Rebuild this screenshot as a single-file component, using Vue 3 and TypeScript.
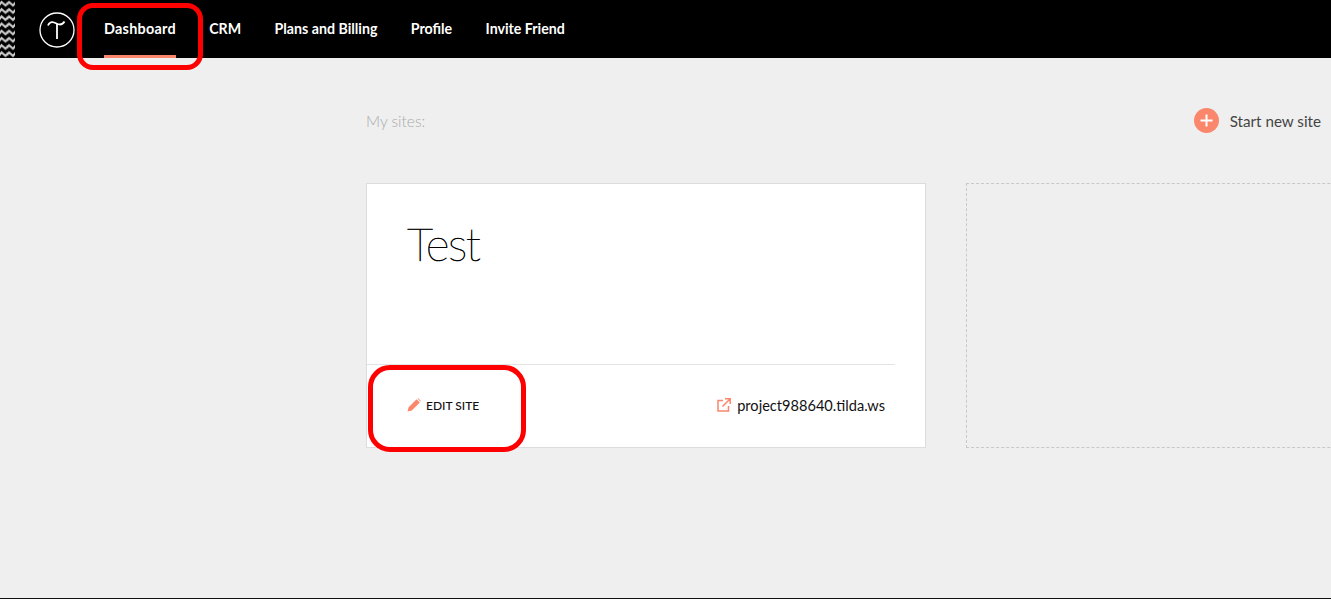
<script setup lang="ts">
const navItems: { label: string; active?: boolean }[] = [
  { label: 'Dashboard', active: true },
  { label: 'CRM' },
  { label: 'Plans and Billing' },
  { label: 'Profile' },
  { label: 'Invite Friend' },
]
</script>

<template>
  <div class="page">
    <header class="topbar">
      <svg class="zigzag" width="15" height="58" viewBox="0 0 15 58" aria-hidden="true">
        <defs>
          <pattern id="zz" width="7.5" height="7.2" patternUnits="userSpaceOnUse">
            <path d="M-1 5.5 L1.5 2 L5.5 5.5 L8.5 2" fill="none" stroke="#cfcfcf" stroke-width="2" />
          </pattern>
        </defs>
        <rect width="15" height="58" fill="url(#zz)" />
      </svg>
      <svg class="logo" width="36" height="36" viewBox="0 0 36 36" aria-hidden="true">
        <circle cx="18" cy="18" r="17" fill="none" stroke="#fff" stroke-width="1.3" />
        <path d="M9 13.5 C11 9 14 9.5 17.5 11.5 C20.5 13 23.5 13 25.5 9.5" fill="none" stroke="#fff" stroke-width="1.8" />
        <path d="M18 12 V27" fill="none" stroke="#fff" stroke-width="1.8" />
      </svg>
      <nav class="nav">
        <a v-for="item in navItems" :key="item.label" class="nav-item" :class="{ active: item.active }">{{ item.label }}</a>
      </nav>
    </header>

    <main class="content">
      <div class="head">
        <span class="my-sites">My sites:</span>
        <a class="new-site">
          <svg width="25" height="25" viewBox="0 0 25 25" aria-hidden="true">
            <circle cx="12.5" cy="12.5" r="12.5" fill="#fa876b" />
            <path d="M12.5 6.5 V18.5 M6.5 12.5 H18.5" stroke="#fff" stroke-width="2" />
          </svg>
          <span>Start new site</span>
        </a>
      </div>

      <div class="cards">
        <section class="card">
          <h2 class="title">Test</h2>
          <div class="card-foot">
            <a class="edit">
              <svg width="14" height="14" viewBox="0 0 14 14" aria-hidden="true">
                <path d="M0.5 13.5 L1.6 9.2 L9.6 1.2 L12.8 4.4 L4.8 12.4 Z M10.4 0.6 L11.2 0.2 L13.8 2.8 L13.4 3.6 Z" fill="#fa876b" />
              </svg>
              <span>EDIT SITE</span>
            </a>
            <a class="link">
              <svg width="14" height="14" viewBox="0 0 14 14" aria-hidden="true">
                <path d="M6 2.5 H1 V13 H11.5 V8 M8 0.8 H13.2 V6 M13 1 L5.5 8.5" fill="none" stroke="#fa876b" stroke-width="1.5" />
              </svg>
              <span>project988640.tilda.ws</span>
            </a>
          </div>
        </section>
        <div class="placeholder"></div>
      </div>
    </main>

    <div class="mark mark-nav"></div>
    <div class="mark mark-edit"></div>
  </div>
</template>

<style>
html, body { margin: 0; background: #efefef; overflow: hidden; }
</style>

<style scoped>
.page {
  position: relative;
  height: 599px;
  box-sizing: border-box;
  border-bottom: 1px solid #111;
  background: #efefef;
  font-family: "Lato", "Liberation Sans", sans-serif;
  overflow: hidden;
}
.topbar {
  display: flex;
  align-items: center;
  height: 58px;
  background: #000;
}
.zigzag { flex: none; }
.logo { flex: none; margin-left: 24px; margin-top: 1px; }
.nav { display: flex; height: 100%; margin-left: 29px; gap: 33.4px; }
.nav-item {
  display: flex;
  align-items: center;
  box-sizing: border-box;
  height: 58px;
  padding-bottom: 1px;
  color: #fff;
  font-size: 14.2px;
  font-weight: 700;
  white-space: nowrap;
}
.nav-item.active {
  border-bottom: 3px solid #fa876b;
  padding-top: 2px;
  padding-bottom: 0;
  font-size: 14.4px;
  letter-spacing: 0.25px;
}
.content { margin-left: 366px; }
.head {
  display: flex;
  justify-content: space-between;
  align-items: center;
  height: 25px;
  margin-top: 50px;
  width: 955px;
}
.my-sites { color: #aaa; font-size: 15.5px; font-weight: 300; }
.new-site {
  display: flex;
  align-items: center;
  gap: 11px;
  color: #444;
  font-size: 15.2px;
  font-weight: 400;
  white-space: nowrap;
}
.cards { display: flex; gap: 40px; margin-top: 50px; }
.card {
  box-sizing: border-box;
  flex: none;
  display: flex;
  flex-direction: column;
  width: 560px;
  height: 265px;
  background: #fff;
  border: 1px solid #dcdcdc;
}
.title {
  margin: 30px 0 0 40px;
  height: 150px;
  color: #000;
  font-size: 46px;
  line-height: 60px;
  font-weight: 100;
  letter-spacing: -1.5px;
  -webkit-text-stroke: 0.6px #000;
}
.card-foot {
  display: flex;
  justify-content: space-between;
  align-items: center;
  box-sizing: border-box;
  height: 83px;
  margin-right: 30px;
  padding: 0 10px 2px 40px;
  border-top: 1px solid #e4e4e4;
}
.edit, .link { display: flex; align-items: center; white-space: nowrap; color: #111; }
.edit { gap: 5px; font-size: 12px; font-weight: 500; letter-spacing: 0; }
.link { gap: 6px; font-size: 14.6px; font-weight: 400; }
.placeholder {
  box-sizing: border-box;
  flex: none;
  width: 560px;
  height: 265px;
  border: 1px dashed #c8c8c8;
}
.mark {
  position: absolute;
  box-sizing: border-box;
  border: 5px solid #f00;
}
.mark-nav { left: 77px; top: 3px; width: 126px; height: 67px; border-radius: 16px; }
.mark-edit { left: 368px; top: 365px; width: 158px; height: 87px; border-radius: 22px; }
</style>
